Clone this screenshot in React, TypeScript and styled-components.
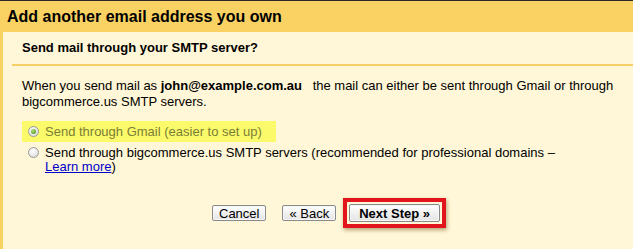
import React from "react";
import styled, { createGlobalStyle } from "styled-components";

const Global = createGlobalStyle`
  html, body { margin: 0; padding: 0; background: #fff7d7; }
  body { font-family: Arial, "Liberation Sans", sans-serif; }
`;

const Page = styled.div`
  width: 633px;
  height: 249px;
  overflow: hidden;
  display: flex;
  flex-direction: column;
  border-top: 1px solid #2a2a2a;
  box-sizing: border-box;
  color: #000;
`;

const Header = styled.div`
  height: 31px;
  background: #fad264;
  padding-left: 7px;
  font: bold 16px/32px Arial, "Liberation Sans", sans-serif;
  flex-shrink: 0;
`;

const Body = styled.div`
  flex: 1;
  background: #fff7d7;
  border-left: 3px solid #fad264;
  display: flex;
  flex-direction: column;
`;

const SubHeader = styled.div`
  height: 32px;
  padding-left: 19px;
  font: bold 13px/32px Arial, "Liberation Sans", sans-serif;
`;

const Rule = styled.div`
  height: 2px;
  margin-left: 9px;
  background: #f7cf67;
`;

const Content = styled.div`
  padding: 12px 0 0 19px;
  font: 13px/16px Arial, "Liberation Sans", sans-serif;
`;

const Paragraph = styled.p`
  margin: 0;
  width: 600px;
`;

const Email = styled.b`
  margin-right: 7px;
`;

const Options = styled.div`
  margin-top: 11px;
  display: flex;
  flex-direction: column;
  line-height: 14px;
`;

const Option = styled.label<{ $highlight?: boolean }>`
  display: flex;
  align-items: flex-start;
  gap: 6px;
  padding: 4px 0 3px 6px;
  width: ${(p) => (p.$highlight ? "248px" : "560px")};
  background: ${(p) => (p.$highlight ? "#fafa6a" : "transparent")};
  color: ${(p) => (p.$highlight ? "#7b7d36" : "#000")};
`;

const Radio = styled.span<{ $checked?: boolean }>`
  flex-shrink: 0;
  width: 11px;
  height: 11px;
  margin-top: 1px;
  border-radius: 50%;
  box-sizing: border-box;
  border: 1px solid #9a9a9a;
  background: radial-gradient(circle at 40% 35%, #ffffff 0%, #e6e6e6 60%, #cfcfcf 100%);
  display: flex;
  align-items: center;
  justify-content: center;
  &::after {
    content: "";
    display: ${(p) => (p.$checked ? "block" : "none")};
    width: 5px;
    height: 5px;
    border-radius: 50%;
    background: radial-gradient(circle at 40% 35%, #b6e07a 0%, #5aa22b 70%, #3e7d1a 100%);
  }
`;

const Link = styled.a`
  color: #0000cc;
  text-decoration: underline;
`;

const Buttons = styled.div`
  margin-top: 21px;
  display: flex;
  align-items: center;
  padding-left: 209px;
  gap: 16px;
`;

const Button = styled.button<{ $primary?: boolean }>`
  font: ${(p) => (p.$primary ? "bold" : "normal")} 13px/13px Arial, "Liberation Sans", sans-serif;
  color: #000;
  height: ${(p) => (p.$primary ? "18px" : "16px")};
  padding: 0 ${(p) => (p.$primary ? "9px" : "6px")};
  border: 1px solid #8a8a8a;
  border-radius: 2px;
  background: linear-gradient(#ffffff, #e4e4e4);
  box-shadow: inset 0 0 0 1px #f6f6f6;
  cursor: pointer;
`;

const Callout = styled.div`
  margin-left: -9px;
  padding: 2px;
  border: 4px solid #e2151c;
  box-shadow: 1px 2px 4px rgba(90, 60, 0, 0.45);
  display: flex;
`;

export default function App() {
  return (
    <>
      <Global />
      <Page>
        <Header>Add another email address you own</Header>
        <Body>
          <SubHeader>Send mail through your SMTP server?</SubHeader>
          <Rule />
          <Content>
            <Paragraph>
              When you send mail as <Email>john@example.com.au</Email> the mail can either be sent
              through Gmail or through bigcommerce.us SMTP servers.
            </Paragraph>
            <Options>
              <Option $highlight>
                <Radio $checked />
                <span>Send through Gmail (easier to set up)</span>
              </Option>
              <Option>
                <Radio />
                <span>
                  Send through bigcommerce.us SMTP servers (recommended for professional domains –
                  <br />
                  <Link href="#">Learn more</Link>)
                </span>
              </Option>
            </Options>
          </Content>
          <Buttons>
            <Button>Cancel</Button>
            <Button>« Back</Button>
            <Callout>
              <Button $primary>Next Step »</Button>
            </Callout>
          </Buttons>
        </Body>
      </Page>
    </>
  );
}
